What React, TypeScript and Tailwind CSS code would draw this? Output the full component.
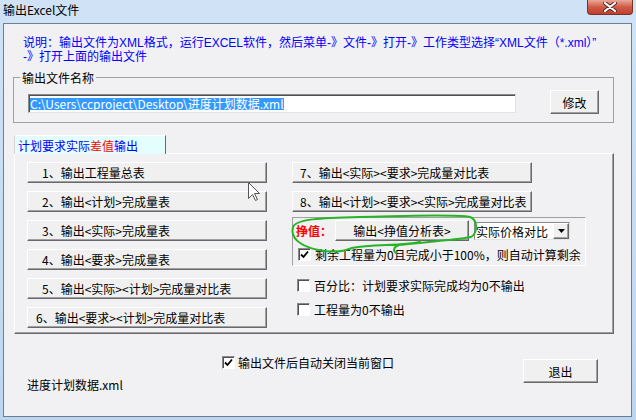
import React from "react";

const FONT = "font-['Noto_Sans_CJK_SC',sans-serif]";

// classic raised 3D button
const raised =
  "bg-[#f0f0f0] border border-t-white border-l-white border-r-[#696969] border-b-[#696969] shadow-[inset_-1px_-1px_0_#a0a0a0] whitespace-nowrap";

const leftButtons: { label: string; pad: string }[] = [
  { label: "1、输出工程量总表", pad: "pl-[14px]" },
  { label: "2、输出<计划>完成量表", pad: "pl-[14px]" },
  { label: "3、输出<实际>完成量表", pad: "pl-[14px]" },
  { label: "4、输出<要求>完成量表", pad: "pl-[14px]" },
  { label: "5、输出<实际><计划>完成量对比表", pad: "pl-[14px]" },
  { label: "6、输出<要求><计划>完成量对比表", pad: "pl-[8px]" },
];

function CheckBox({ checked }: { checked?: boolean }) {
  return (
    <div className="w-[13px] h-[13px] shrink-0 bg-white border border-t-[#8a8a8a] border-l-[#8a8a8a] border-r-white border-b-white shadow-[inset_1px_1px_0_#505050] flex items-center justify-center">
      {checked && (
        <svg width="9" height="9" viewBox="0 0 9 9">
          <path d="M1 4.5 L3.5 7 L8 1.5" fill="none" stroke="#000" strokeWidth={1.8} />
        </svg>
      )}
    </div>
  );
}

export default function App() {
  return (
    <div className={`relative w-[636px] h-[420px] overflow-hidden flex flex-col bg-gradient-to-b from-[#d0e3f6] to-[#bdd6f0] text-[12px] leading-[13px] text-black ${FONT}`}>
      {/* Title bar */}
      <div className="h-[23px] flex items-start justify-between shrink-0">
        <span className="pl-[3px] pt-[3px]">输出Excel文件</span>
        <div className="mr-[3px] w-[46px] h-[15px] rounded-b-[4px] border border-t-0 border-[#7a3128] bg-gradient-to-b from-[#e9a897] via-[#cf5a48] to-[#c23f2c] flex items-center justify-center">
          <svg width="14" height="10" viewBox="0 0 14 10">
            <path d="M2 1 L12 9 M12 1 L2 9" stroke="#5a2a24" strokeWidth={4} strokeLinecap="round" />
            <path d="M2 1 L12 9 M12 1 L2 9" stroke="#fff" strokeWidth={2.2} strokeLinecap="round" />
          </svg>
        </div>
      </div>

      {/* Window body */}
      <div className="ml-[3px] mr-[4px] h-[394px] bg-[#f1f0f3] border border-[#6f7f93] flex flex-col">
        {/* Description */}
        <div className="pt-[12px] pl-[19px] leading-[14px] text-[#0000ff] whitespace-nowrap font-['Liberation_Sans','Noto_Sans_CJK_SC',sans-serif]">
          <div>说明：输出文件为XML格式，运行EXCEL软件，然后菜单-》文件-》打开-》工作类型选择“XML文件（*.xml）”</div>
          <div>-》打开上面的输出文件</div>
        </div>

        {/* Output filename group */}
        <fieldset className="mt-[7px] ml-[9px] w-[601px] h-[52px] border border-[#a0a0a0]">
          <legend className="ml-[6px] px-[2px] leading-[13px]">输出文件名称</legend>
          <div className="flex items-start">
            <div className="mt-[10px] ml-[14px] w-[488px] h-[19px] bg-white border border-t-[#8a8a8a] border-l-[#8a8a8a] border-r-[#e3e3e3] border-b-[#e3e3e3] shadow-[inset_1px_1px_0_#505050] flex items-center pl-[1px]">
              <span className="inline-block h-[12px] leading-[12px] bg-[#3399ff] text-white whitespace-nowrap">
                {"C:\\Users\\ccproject\\Desktop\\进度计划数据.xml"}
              </span>
            </div>
            <button className={`${raised} ml-[34px] mt-[6px] w-[49px] h-[24px] flex items-center justify-center`}>
              修改
            </button>
          </div>
        </fieldset>

        {/* Tab */}
        <div className="mt-[12px] ml-[10px] w-[152px] h-[19px] -mb-px relative z-10 bg-[#e4fdfd] border border-b-0 border-t-white border-l-[#d8d8d8] border-r-[#696969] pl-[3px] flex items-center text-[#0000ff] whitespace-nowrap">
          计划要求实际<span className="text-[#ff0000]">差值</span>输出
        </div>

        {/* Tab panel */}
        <div className="ml-[10px] w-[600px] h-[181px] border border-t-white border-l-white border-r-[#696969] border-b-[#696969] shadow-[inset_-1px_-1px_0_#a0a0a0] flex pt-[8px] pl-[12px]">
          <div className="w-[240px] flex flex-col gap-[8px]">
            {leftButtons.map((b) => (
              <button key={b.label} className={`${raised} h-[21px] w-[240px] flex items-center ${b.pad}`}>
                {b.label}
              </button>
            ))}
          </div>

          <div className="ml-[25px] w-[294px] flex flex-col">
            <button className={`${raised} h-[21px] w-[240px] flex items-center pl-[7px]`}>
              {"7、输出<实际><要求>完成量对比表"}
            </button>
            <button className={`${raised} mt-[8px] h-[21px] w-[240px] flex items-center pl-[7px]`}>
              {"8、输出<计划><要求><实际>完成量对比表"}
            </button>

            {/* Earned value group */}
            <div className="mt-[5px] w-[294px] h-[49px] border border-t-[#a0a0a0] border-l-[#a0a0a0] border-r-white border-b-white flex flex-col">
              <div className="flex items-start">
                <span className="w-[42px] pl-[3px] mt-[6px] text-[#ff0000] font-bold">挣值：</span>
                <button className={`${raised} mt-[2px] w-[134px] h-[21px] flex items-center justify-center`}>
                  {"输出<挣值分析表>"}
                </button>
                <div className="ml-[5px] mt-[4px] w-[96px] h-[18px] bg-white border border-t-[#8a8a8a] border-l-[#8a8a8a] border-r-[#e3e3e3] border-b-[#e3e3e3] flex items-center">
                  <span className="flex-1 pl-[1px] whitespace-nowrap">实际价格对比</span>
                  <div className={`${raised} w-[16px] h-[16px] flex items-center justify-center`}>
                    <svg width="7" height="4" viewBox="0 0 7 4">
                      <path d="M0 0 H7 L3.5 4 Z" fill="#000" />
                    </svg>
                  </div>
                </div>
              </div>
              <div className="mt-[7px] pl-[5px] flex items-center gap-[4px] whitespace-nowrap">
                <CheckBox checked />
                <span>剩余工程量为0且完成小于100%，则自动计算剩余</span>
              </div>
            </div>

            <div className="mt-[13px] pl-[5px] flex items-center gap-[4px] whitespace-nowrap">
              <CheckBox />
              <span>百分比：计划要求实际完成均为0不输出</span>
            </div>
            <div className="mt-[11px] pl-[5px] flex items-center gap-[4px] whitespace-nowrap">
              <CheckBox />
              <span>工程量为0不输出</span>
            </div>
          </div>
        </div>

        {/* Bottom area */}
        <div className="flex flex-1">
          <div className="w-[218px] pt-[44px] pl-[23px] whitespace-nowrap">进度计划数据.xml</div>
          <div className="w-[301px] pt-[22px] flex items-start gap-[3px] whitespace-nowrap">
            <CheckBox checked />
            <span>输出文件后自动关闭当前窗口</span>
          </div>
          <button className={`${raised} mt-[25px] w-[75px] h-[24px] flex items-center justify-center`}>
            退出
          </button>
        </div>
      </div>

      {/* Hand-drawn green annotation */}
      <svg className="absolute left-0 top-0 pointer-events-none" width="636" height="420" viewBox="0 0 636 420">
        <path
          d="M293 227 C296 219, 320 218, 360 217 C410 216, 452 214, 470 217 C478 220, 478 233, 471 237 C450 241, 420 242, 399 245 C393 247, 393 251, 396 253 M293 227 C290 238, 300 246, 318 250 C333 253, 345 251, 352 248 C372 244, 400 246, 420 242"
          fill="none"
          stroke="#27b527"
          strokeWidth={2}
          strokeLinecap="round"
        />
      </svg>

      {/* Mouse pointer */}
      <svg className="absolute left-[248px] top-[182px] pointer-events-none" width="13" height="20" viewBox="0 0 13 20">
        <path d="M0.5 0.5 L0.5 16.5 L4.5 12.5 L7.5 18.5 L9.5 17.5 L6.5 11.5 L11.5 11.5 Z" fill="#fff" stroke="#555" strokeWidth={1} />
      </svg>
    </div>
  );
}
